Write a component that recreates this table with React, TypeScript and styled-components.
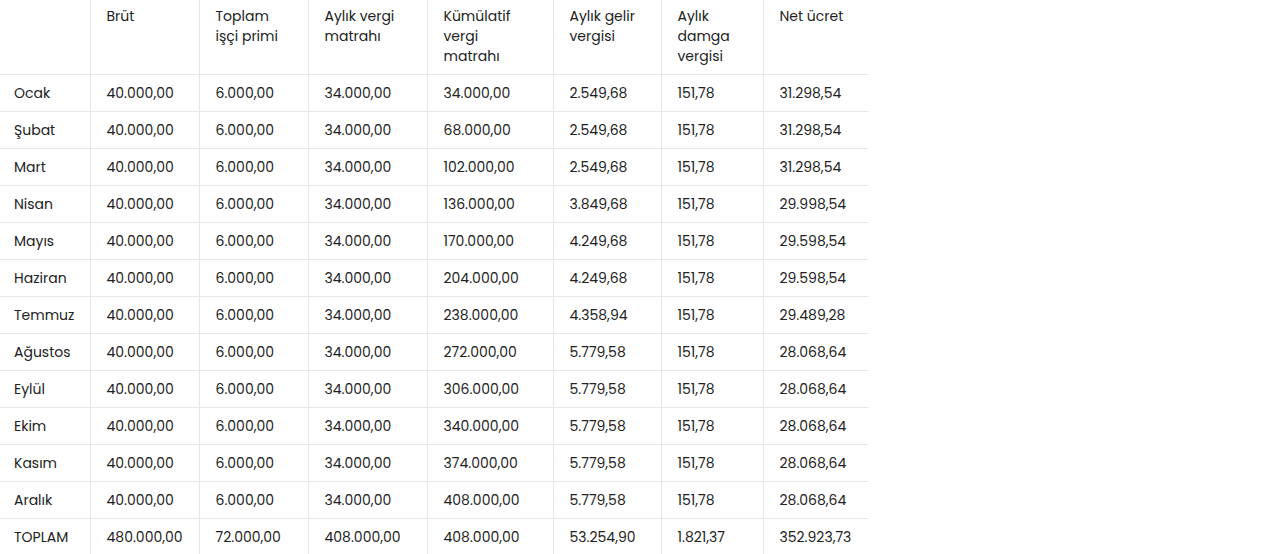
import React from "react";
import styled, { createGlobalStyle } from "styled-components";

const GlobalStyle = createGlobalStyle`
  html, body { margin: 0; padding: 0; background: #ffffff; }
  body { font-family: Poppins, Inter, "Noto Sans", sans-serif; color: #222222; }
`;

const Table = styled.table`
  border-collapse: collapse;
  table-layout: fixed;
  width: 868px;
  font-size: 14px;
  color: #222222;
`;

const HeadCell = styled.th<{ $first?: boolean }>`
  text-align: left;
  vertical-align: top;
  font-weight: 400;
  line-height: 20px;
  height: 74px;
  box-sizing: border-box;
  padding: 6px 12px 8px ${(p) => (p.$first ? "14px" : "16px")};
  border-left: ${(p) => (p.$first ? "none" : "1px solid #e6e6e6")};
`;

const Row = styled.tr`
  border-top: 1px solid #e6e6e6;
`;

const Cell = styled.td<{ $first?: boolean }>`
  height: 36px;
  padding: 0 8px 0 ${(p) => (p.$first ? "14px" : "16px")};
  line-height: 20px;
  white-space: nowrap;
  vertical-align: middle;
  border-left: ${(p) => (p.$first ? "none" : "1px solid #e6e6e6")};
`;

const widths = [90, 109, 109, 119, 126, 108, 102, 105];

const headers = [
  "",
  "Brüt",
  "Toplam\nişçi primi",
  "Aylık vergi\nmatrahı",
  "Kümülatif\nvergi\nmatrahı",
  "Aylık gelir\nvergisi",
  "Aylık\ndamga\nvergisi",
  "Net ücret",
];

const rows: string[][] = [
  ["Ocak", "40.000,00", "6.000,00", "34.000,00", "34.000,00", "2.549,68", "151,78", "31.298,54"],
  ["Şubat", "40.000,00", "6.000,00", "34.000,00", "68.000,00", "2.549,68", "151,78", "31.298,54"],
  ["Mart", "40.000,00", "6.000,00", "34.000,00", "102.000,00", "2.549,68", "151,78", "31.298,54"],
  ["Nisan", "40.000,00", "6.000,00", "34.000,00", "136.000,00", "3.849,68", "151,78", "29.998,54"],
  ["Mayıs", "40.000,00", "6.000,00", "34.000,00", "170.000,00", "4.249,68", "151,78", "29.598,54"],
  ["Haziran", "40.000,00", "6.000,00", "34.000,00", "204.000,00", "4.249,68", "151,78", "29.598,54"],
  ["Temmuz", "40.000,00", "6.000,00", "34.000,00", "238.000,00", "4.358,94", "151,78", "29.489,28"],
  ["Ağustos", "40.000,00", "6.000,00", "34.000,00", "272.000,00", "5.779,58", "151,78", "28.068,64"],
  ["Eylül", "40.000,00", "6.000,00", "34.000,00", "306.000,00", "5.779,58", "151,78", "28.068,64"],
  ["Ekim", "40.000,00", "6.000,00", "34.000,00", "340.000,00", "5.779,58", "151,78", "28.068,64"],
  ["Kasım", "40.000,00", "6.000,00", "34.000,00", "374.000,00", "5.779,58", "151,78", "28.068,64"],
  ["Aralık", "40.000,00", "6.000,00", "34.000,00", "408.000,00", "5.779,58", "151,78", "28.068,64"],
  ["TOPLAM", "480.000,00", "72.000,00", "408.000,00", "408.000,00", "53.254,90", "1.821,37", "352.923,73"],
];

export default function App() {
  return (
    <>
      <GlobalStyle />
      <Table>
        <colgroup>
          {widths.map((w, i) => (
            <col key={i} style={{ width: w }} />
          ))}
        </colgroup>
        <thead>
          <tr>
            {headers.map((h, i) => (
              <HeadCell key={i} $first={i === 0}>
                {h.split("\n").map((line, j) => (
                  <React.Fragment key={j}>
                    {j > 0 && <br />}
                    {line}
                  </React.Fragment>
                ))}
              </HeadCell>
            ))}
          </tr>
        </thead>
        <tbody>
          {rows.map((r, i) => (
            <Row key={i}>
              {r.map((c, j) => (
                <Cell key={j} $first={j === 0}>
                  {c}
                </Cell>
              ))}
            </Row>
          ))}
        </tbody>
      </Table>
    </>
  );
}
